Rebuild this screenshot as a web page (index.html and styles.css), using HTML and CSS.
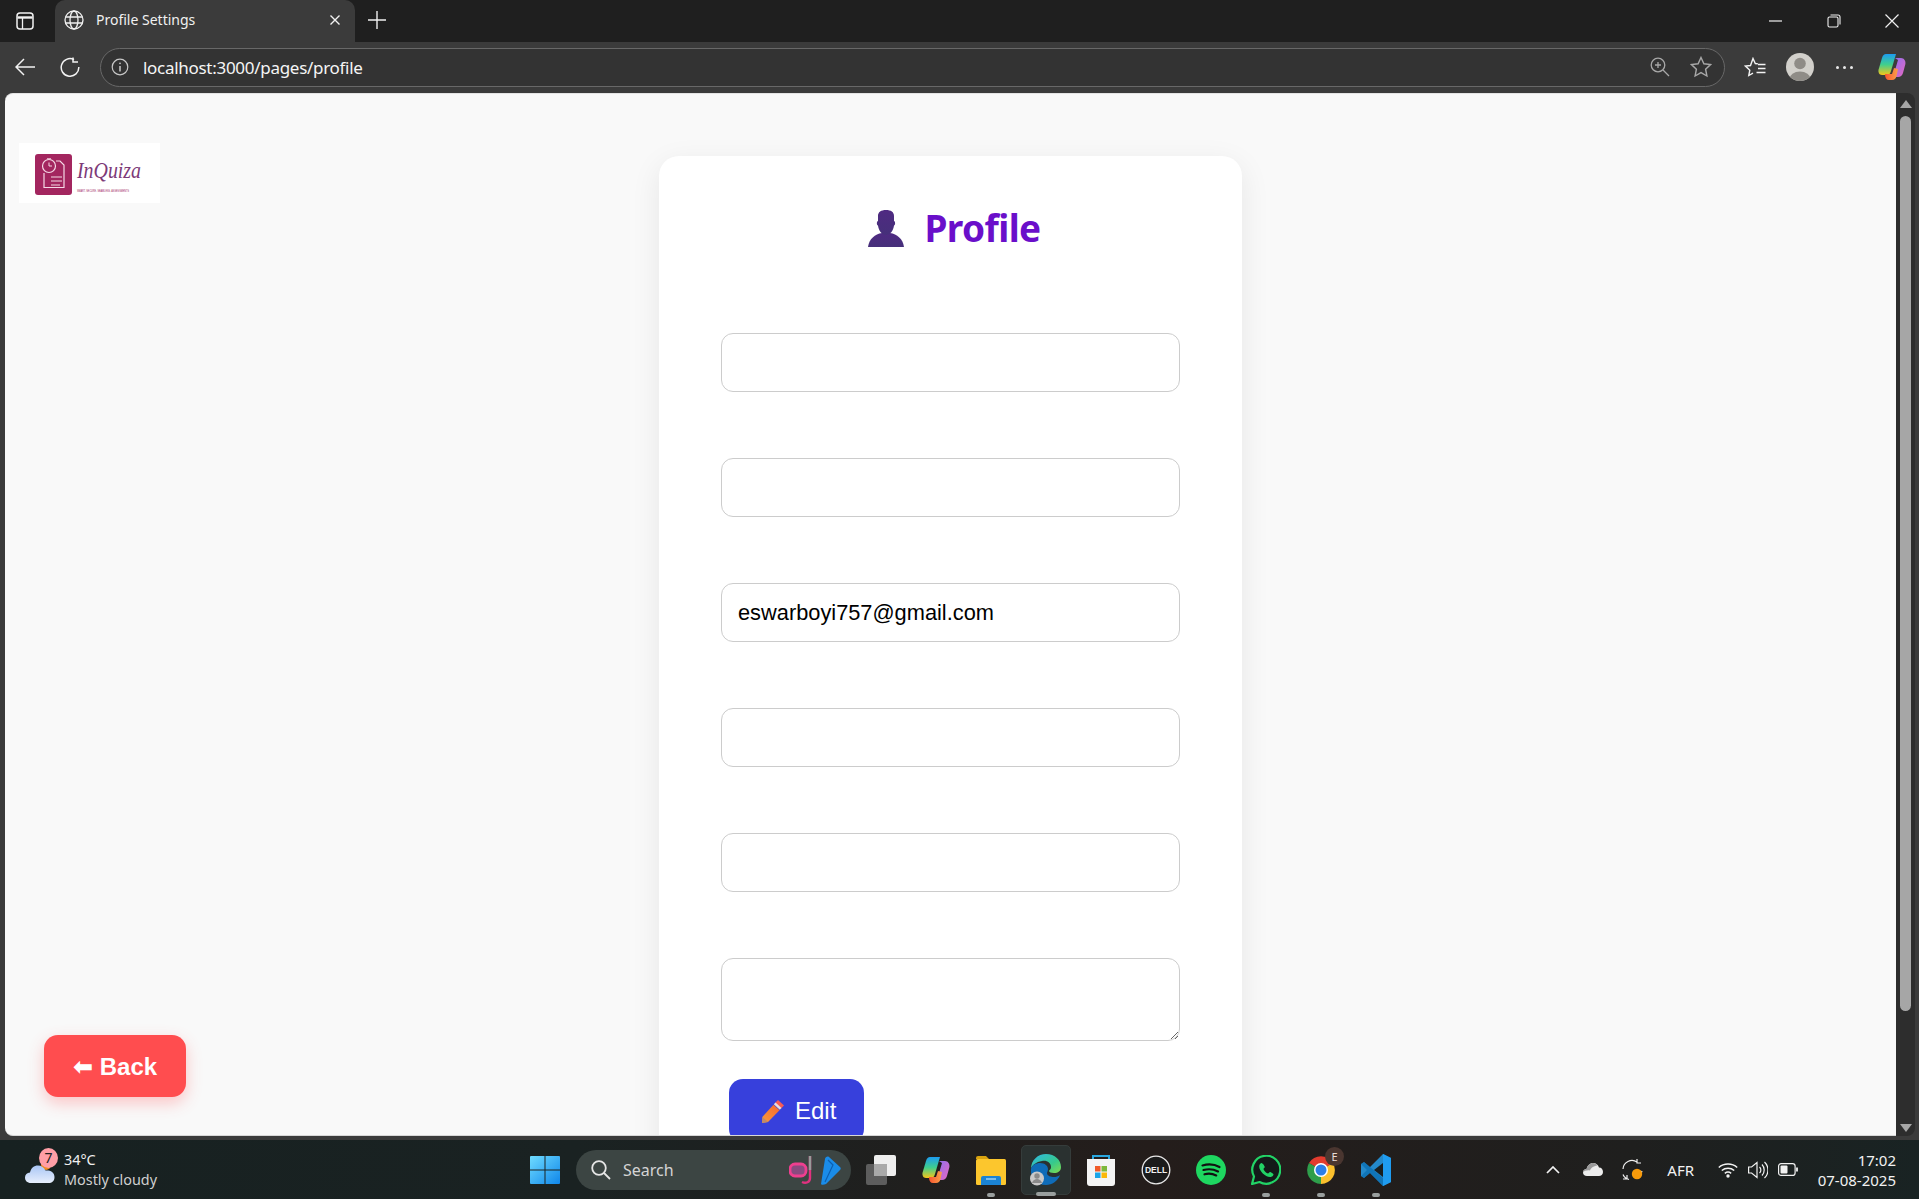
FILE: index.html
```html
<!DOCTYPE html>
<html lang="en">
<head>
<meta charset="utf-8">
<title>Profile Settings</title>
<link rel="stylesheet" href="styles.css">
</head>
<body>
<div class="window">
  <header class="tabbar">
    <svg class="tb-side" viewBox="0 0 18 18" width="18" height="18"><rect x="1" y="1" width="16" height="16" rx="3" fill="none" stroke="#f2f2f2" stroke-width="1.5"/><path d="M1.5 5.5h15" stroke="#f2f2f2" stroke-width="2.4"/><path d="M6.5 5v12" stroke="#f2f2f2" stroke-width="1.3"/></svg>
    <div class="tab">
      <svg viewBox="0 0 20 20" width="20" height="20" fill="none" stroke="#f0f0f0" stroke-width="1.3"><circle cx="10" cy="10" r="9"/><ellipse cx="10" cy="10" rx="4" ry="9"/><path d="M1.6 7h16.8M1.6 13h16.8"/></svg>
      <span class="tab-title">Profile Settings</span>
      <svg class="tab-x" viewBox="0 0 12 12" width="12" height="12"><path d="M1.5 1.5l9 9M10.5 1.5l-9 9" stroke="#f2f2f2" stroke-width="1.4"/></svg>
    </div>
    <svg class="tb-plus" viewBox="0 0 18 18" width="18" height="18"><path d="M9 0v18M0 9h18" stroke="#f0f0f0" stroke-width="1.4"/></svg>
    <div class="winbtns">
      <svg viewBox="0 0 14 14" width="14" height="14"><path d="M0 7h13" stroke="#f0f0f0" stroke-width="1.2"/></svg>
      <svg viewBox="0 0 14 14" width="14" height="14" fill="none" stroke="#f0f0f0" stroke-width="1.1"><rect x="1" y="3" width="10" height="10" rx="1.5"/><path d="M3.5 1h7.5a2 2 0 0 1 2 2v7.5"/></svg>
      <svg viewBox="0 0 14 14" width="14" height="14"><path d="M.5.5l13 13M13.500.5l-13 13" stroke="#f0f0f0" stroke-width="1.2"/></svg>
    </div>
  </header>

  <nav class="toolbar">
    <svg class="tl-back" viewBox="0 0 20 18" width="20" height="18" fill="none" stroke="#f2f2f2" stroke-width="1.5"><path d="M20 9H1M9 1L1 9l8 8"/></svg>
    <svg class="tl-reload" viewBox="0 0 20 20" width="20" height="20" fill="none" stroke="#f2f2f2" stroke-width="1.5"><path d="M14 2.6A8.800 8.800 0 1 0 18.800 10"/><path d="M13 .5v4.600h5"/></svg>
    <div class="addr">
      <svg viewBox="0 0 18 18" width="18" height="18" fill="none" stroke="#c8c8c8" stroke-width="1.2"><circle cx="9" cy="9" r="7.800"/><path d="M9 8v5.500" stroke-width="1.500"/><circle cx="9" cy="5.300" r=".9" fill="#c8c8c8" stroke="none"/></svg>
      <span class="url">localhost:3000/pages/profile</span>
      <svg class="ad-zoom" viewBox="0 0 20 20" width="20" height="20" fill="none" stroke="#a8a8a8" stroke-width="1.3"><circle cx="8" cy="8" r="6.800"/><path d="M5 8h6M8 5v6M13 13l6 6"/></svg>
      <svg class="ad-star" viewBox="0 0 22 22" width="22" height="22" fill="none" stroke="#a8a8a8" stroke-width="1.4"><path d="M11 1.500l2.900 6.300 6.600.8-4.900 4.600 1.300 6.800-5.900-3.400-5.900 3.400 1.300-6.800L1.500 8.600l6.600-.8z"/></svg>
    </div>
    <svg class="tl-fav" viewBox="0 0 22 20" width="22" height="20" fill="none" stroke="#f2f2f2" stroke-width="1.4"><path d="M13.800 6.700L11.300 6.500 9 1.500 6.500 8.500l-5 .6 4.300 4.100-1 5.300 4.200-2.300"/><path d="M14 7.500h7.500M14 11.500h7.500M12.500 15.500h9"/></svg>
    <svg class="tl-avatar" viewBox="0 0 28 28" width="28" height="28"><defs><clipPath id="avc"><circle cx="14" cy="14" r="14"/></clipPath></defs><circle cx="14" cy="14" r="14" fill="#d2d0cb"/><g clip-path="url(#avc)" fill="#8f8c87"><circle cx="14" cy="10.500" r="5.800"/><ellipse cx="14" cy="26" rx="10.500" ry="7.500"/></g></svg>
    <div class="tl-dots"><i></i><i></i><i></i></div>
    <svg class="tl-copilot" viewBox="0 0 28 28" width="28" height="28"><defs><linearGradient id="cpa" x1="0" y1="0" x2="0" y2="1"><stop offset="0" stop-color="#1d9cf0"/><stop offset=".5" stop-color="#3fcf8e"/><stop offset="1" stop-color="#f5c518"/></linearGradient><linearGradient id="cpb" x1="0" y1="0" x2="1" y2="1"><stop offset="0" stop-color="#8b6ff0"/><stop offset="1" stop-color="#e868c0"/></linearGradient><linearGradient id="cpc" x1="0" y1="0" x2="1" y2="0"><stop offset="0" stop-color="#f8552f"/><stop offset="1" stop-color="#f9a14a"/></linearGradient></defs><path d="M8 1h10l-5 17c-1 3-2 4-4.500 4H4C1 22 0 19 .6 16.500L4 5C5 2 6 1 8 1z" fill="url(#cpa)"/><path d="M17 5h6c3 0 5 3 4.400 6l-2.400 9c-.8 2.600-2.500 4-5 4h-5l5-17z" fill="url(#cpb)"/><path d="M7 21h7l2-6 4 1-1.500 7c-.6 2.500-2 4-4.500 4h-3c-2.500 0-4-2-4-6z" fill="url(#cpc)"/></svg>
  </nav>

  <div class="viewport">
    <main class="page">
      <div class="logo">
        <svg viewBox="0 0 141 60" width="141" height="60">
          <rect x="16" y="11" width="37" height="41" rx="3" fill="#a3265f"/>
          <circle cx="30" cy="23" r="6.500" fill="none" stroke="#f5d9e6" stroke-width="1.200"/>
          <path d="M30 19.500V23h3M28 15.800h4" stroke="#f5d9e6" stroke-width="1" fill="none"/>
          <path d="M25 30v14.500h20V22l-4-4h-4" fill="none" stroke="#f5d9e6" stroke-width="1.200"/>
          <path d="M32 34h11M32 38h11M32 42h9" stroke="#f5d9e6" stroke-width="1.200"/>
          <text class="logo-name" x="58" y="35" textLength="64" lengthAdjust="spacingAndGlyphs">InQuiza</text>
          <text class="logo-tag" x="58" y="48.500" textLength="52" lengthAdjust="spacingAndGlyphs">SMART. SECURE. SEAMLESS. ASSESSMENTS</text>
        </svg>
      </div>

      <section class="card">
        <h1 class="title">
          <svg viewBox="0 0 36 37" width="36" height="37"><defs><linearGradient id="pers" x1="0" y1="0" x2="0" y2="1"><stop offset="0" stop-color="#4f2a82"/><stop offset="1" stop-color="#46307a"/></linearGradient></defs><path d="M0 37C1 29 7 24 14 23h8c7 1 13 6 14 14z" fill="url(#pers)"/><path d="M10 6C10 2 13 0 18 0s8 2 8 6v5c1.500 0 1.500 4.500 0 4.500-.5 5-4 9.500-8 9.500s-7.500-4.500-8-9.500C8.500 15.500 8.500 11 10 11z" fill="url(#pers)"/></svg>
          <span>Profile</span>
        </h1>
        <form class="form">
          <input class="field" type="text" aria-label="First name">
          <input class="field" type="text" aria-label="Last name">
          <input class="field" type="email" aria-label="Email" value="eswarboyi757@gmail.com">
          <input class="field" type="text" aria-label="Phone">
          <input class="field" type="text" aria-label="Location">
          <textarea class="field area" aria-label="Bio"></textarea>
          <button class="edit" type="button">
            <svg viewBox="0 0 24 24" width="24" height="24"><defs><linearGradient id="pen" x1="0" y1="1" x2="1" y2="0"><stop offset="0" stop-color="#f99a3c"/><stop offset="1" stop-color="#f5682f"/></linearGradient></defs><path d="M17 1l6 5.500-3 3-6-5.500z" fill="#f85c55"/><path d="M14.500 3.500l6 5.500-1.700 1.800-6-5.500z" fill="#e8dfe0"/><path d="M12.500 5.800l6 5.500L7 23l-6 1 .5-6.300z" fill="url(#pen)"/><path d="M1.400 18l5.800 5L1 24z" fill="#c08a6a"/></svg>
            <span>Edit</span>
          </button>
        </form>
      </section>

      <button class="back" type="button">⬅ Back</button>
    </main>
    <aside class="scrollbar">
      <i class="sb-up"></i>
      <i class="sb-thumb"></i>
      <i class="sb-down"></i>
    </aside>
  </div>

  <footer class="taskbar">
    <div class="tk-left">
      <div class="weather-ic">
        <svg viewBox="0 0 32 32" width="32" height="32"><defs><linearGradient id="cl" x1="0" y1="0" x2="0" y2="1"><stop offset="0" stop-color="#a9c6f5"/><stop offset="1" stop-color="#e6eefc"/></linearGradient></defs><circle cx="22" cy="11" r="5" fill="#f08a24"/><path d="M7 29c-4 0-6-2.500-6-5.500S3 19 6 18.500C7 14 10 11.500 14 11.500c3.500 0 6 2 7.500 5 4-.5 9 1 9 6.500 0 4-2.500 6-6 6z" fill="url(#cl)"/></svg>
        <span class="badge">7</span>
      </div>
      <div class="weather">
        <span class="temp">34°C</span>
        <span class="cond">Mostly cloudy</span>
      </div>
    </div>
    <div class="tk-center">
      <svg class="winlogo" viewBox="0 0 30 30" width="30" height="30"><defs><linearGradient id="wn" x1="0" y1="0" x2="1" y2="1"><stop offset="0" stop-color="#6fdcff"/><stop offset="1" stop-color="#0f86ea"/></linearGradient></defs><path d="M1 1h13.500v13.500H0V2a1 1 0 0 1 1-1zM15.500 1H29a1 1 0 0 1 1 1v12.500H15.500zM0 15.500h14.500V29H1a1 1 0 0 1-1-1zM15.500 15.500H30V28a1 1 0 0 1-1 1H15.500z" fill="url(#wn)"/></svg>
      <div class="search">
        <svg viewBox="0 0 20 20" width="20" height="20" fill="none" stroke="#e6e6e6" stroke-width="1.800"><circle cx="8" cy="8" r="6.800"/><path d="M13 13l6 6"/></svg>
        <span class="search-t">Search</span>
        <svg class="snorkel" viewBox="0 0 52 30" width="52" height="30"><path d="M21 1v22c0 4-4 6-8 4" fill="none" stroke="#e0327f" stroke-width="2.400"/><path d="M21 1v14" stroke="#9a9a9a" stroke-width="2.400"/><rect x="1" y="9" width="16" height="12" rx="5" fill="#8a4a80" stroke="#ee3f8f" stroke-width="2.800"/><path d="M32 29l4-25c.3-2 2.500-3 4-2l11 10c1 1 1 2 0 3L37 29c-2 1-5 1-5 0z" fill="#1a8ce8"/><path d="M39 5l5 5-8 17" fill="none" stroke="#0c5fb0" stroke-width="1.200"/></svg>
      </div>
      <div class="apps">
        <span class="app">
          <svg viewBox="0 0 30 30" width="30" height="30"><rect x="0" y="9" width="21" height="21" rx="2" fill="#5d5d5d"/><rect x="8" y="0" width="22" height="21" rx="2" fill="#eeeeee"/><rect x="8" y="9" width="13" height="12" fill="#a9a9a9"/></svg>
        </span>
        <span class="app">
          <svg viewBox="0 0 28 28" width="28" height="28"><path d="M8 1h10l-5 17c-1 3-2 4-4.500 4H4C1 22 0 19 .6 16.500L4 5C5 2 6 1 8 1z" fill="url(#cpa)"/><path d="M17 5h6c3 0 5 3 4.400 6l-2.400 9c-.8 2.600-2.500 4-5 4h-5l5-17z" fill="url(#cpb)"/><path d="M7 21h7l2-6 4 1-1.500 7c-.6 2.500-2 4-4.500 4h-3c-2.500 0-4-2-4-6z" fill="url(#cpc)"/></svg>
        </span>
        <span class="app has-dot">
          <svg viewBox="0 0 30 30" width="30" height="30"><path d="M0 3a2 2 0 0 1 2-2h8l3 3h-13z" fill="#d9a30f"/><rect x="0" y="4" width="30" height="26" rx="1.500" fill="#fcc62d"/><path d="M5 30v-7a2 2 0 0 1 2-2h16a2 2 0 0 1 2 2v7z" fill="#1b83d4"/><path d="M10 24h10" stroke="#bfe3fb" stroke-width="1.200"/></svg>
        </span>
        <span class="app app-active has-dot">
          <svg viewBox="0 0 32 32" width="32" height="32"><defs><linearGradient id="eg" x1="0" y1="0" x2="1" y2="1"><stop offset="0" stop-color="#2fb8e8"/><stop offset=".6" stop-color="#36c98c"/><stop offset="1" stop-color="#7fdc4e"/></linearGradient></defs><path d="M1 15C1 6 8 0 16 0c9 0 15 6 15 13 0 4-3 6-7 6-3 0-5-1-5-2 0-1 2-1 2-4 0-4-4-7-9-6C6 8 2 11 1 15z" fill="url(#eg)"/><path d="M1 15c1-4 5-6 9-6 5 0 8 3 8 6 0 2-1 3-1 4 0 3 4 4 7 4 2 0 4-.5 6-2-2 6-8 10-14 10C7 31 0 24 1 15z" fill="#0f6cb8"/><circle cx="7" cy="24.500" r="7" fill="#c9c9c9"/><circle cx="7" cy="22" r="2.700" fill="#8a8a8a"/><path d="M2 29c1-3 3-4 5-4s4 1 5 4z" fill="#8a8a8a"/></svg>
        </span>
        <span class="app">
          <svg viewBox="0 0 30 32" width="30" height="32"><path d="M7 6V2h16v4" fill="none" stroke="#2aa8e0" stroke-width="2"/><path d="M1 5h28v24a3 3 0 0 1-3 3H4a3 3 0 0 1-3-3z" fill="#f4f4f4"/><rect x="9" y="12" width="5.500" height="5.500" fill="#f05a28"/><rect x="15.500" y="12" width="5.500" height="5.500" fill="#7db83a"/><rect x="9" y="18.500" width="5.500" height="5.500" fill="#1ba5e8"/><rect x="15.500" y="18.500" width="5.500" height="5.500" fill="#fbb809"/></svg>
        </span>
        <span class="app">
          <svg viewBox="0 0 30 30" width="30" height="30"><circle cx="15" cy="15" r="13.800" fill="#1b1b1b" stroke="#e8e8e8" stroke-width="1.300"/><text class="dell" x="15" y="18" text-anchor="middle">DELL</text></svg>
        </span>
        <span class="app">
          <svg viewBox="0 0 30 30" width="30" height="30"><circle cx="15" cy="15" r="15" fill="#1ed760"/><path d="M6.500 10.500c6-1.700 12-1.200 17 1.500M7.500 15c5-1.300 10-.9 14.500 1.400M8.500 19.300c4-1 8-.7 11.700 1.100" fill="none" stroke="#111" stroke-width="2.200" stroke-linecap="round"/></svg>
        </span>
        <span class="app has-dot">
          <svg viewBox="0 0 30 30" width="30" height="30"><path d="M1 29l2-7.500A14 14 0 1 1 8.500 27z" fill="#131a19" stroke="#22d366" stroke-width="2.200" stroke-linejoin="round"/><path d="M10.800 8c-1.200 0-2.600 1.500-2.600 3.500 0 4.500 6 10.500 10.800 10.500 2 0 3.500-1.500 3.500-2.800 0-.5-3-2.200-3.500-2.200-.6 0-1.400 1.500-2 1.500-1.200 0-4.500-3.300-4.500-4.500 0-.6 1.300-1.300 1.300-2 0-.6-1.700-3.500-2.500-3.500z" fill="#22d366"/></svg>
        </span>
        <span class="app has-dot">
          <svg viewBox="0 0 30 30" width="30" height="30"><path d="M15 15L3 8A14 14 0 0 1 27 8z" fill="#e23b2e"/><path d="M15 15L27 8A14 14 0 0 1 15 29z" fill="#fbc02d"/><path d="M15 15L15 29A14 14 0 0 1 3 8z" fill="#2e9e4b"/><circle cx="15" cy="15" r="7" fill="#fff"/><circle cx="15" cy="15" r="5.500" fill="#2d7ee8"/></svg>
          <span class="chrome-e">E</span>
        </span>
        <span class="app has-dot">
          <svg viewBox="0 0 30 32" width="30" height="32"><path d="M22 0l8 4v24l-8 4L9 19l-6 5-3-2v-12l3-2 6 5z" fill="#2489ca"/><path d="M22 0l8 4v24l-8 4z" fill="#1f9cf0"/><path d="M22 9l-9 7 9 7z" fill="#1a1f1f"/><path d="M0 10l3-2 19 16v8L9 19l-6 5-3-2 6-6z" fill="#0065a9" opacity=".55"/></svg>
        </span>
      </div>
    </div>
    <div class="tk-right">
      <svg class="tr-chev" viewBox="0 0 14 8" width="14" height="8" fill="none" stroke="#f2f2f2" stroke-width="1.700"><path d="M1 7l6-6 6 6"/></svg>
      <svg class="tr-cloud" viewBox="0 0 20 13" width="20" height="13"><path d="M4 13C1.500 13 0 11.500 0 9.500S1.500 6 3.500 6C4.500 2.500 7 0 10 0s5 1.500 6 4.500c2.500 0 4 2 4 4.500s-2 4-4 4z" fill="#ececec"/><path d="M0 9.500C0 7.500 1.500 6 3.500 6 4.500 2.500 7 0 10 0c2 0 3.500 1 4.500 2.500C10 3 8 5 7 7.500 4 7 1 8 0 9.500z" fill="#9a9a9a"/></svg>
      <svg class="tr-sync" viewBox="0 0 22 22" width="22" height="22" fill="none" stroke="#f0f0f0" stroke-width="1.200"><path d="M1 10A9 9 0 0 1 15 3M15 0v4h4M20 12a9 9 0 0 1-3 5M1 20h4v-4M1 15.500A9 9 0 0 0 7 20.500"/><circle cx="15" cy="15" r="5.200" fill="#f79a0b" stroke="none"/></svg>
      <span class="lang">AFR</span>
      <svg class="tr-wifi" viewBox="0 0 20 16" width="20" height="16" fill="none" stroke="#f2f2f2" stroke-width="1.500"><path d="M.8 5.500C5.800.8 14.200.8 19.200 5.500M3.800 8.500c3.500-3 9-3 12.400 0M6.800 11.300c2-1.500 4.400-1.500 6.400 0"/><circle cx="10" cy="14" r="1.700" fill="#f2f2f2" stroke="none"/></svg>
      <svg class="tr-vol" viewBox="0 0 20 18" width="20" height="18" fill="none" stroke="#f2f2f2" stroke-width="1.200"><path d="M.6 6h3L9 1.500v15L3.600 12h-3zM11.500 6a4 4 0 0 1 0 6M14 3.500a8 8 0 0 1 0 11M16.500 1a11 11 0 0 1 0 16"/></svg>
      <svg class="tr-bat" viewBox="0 0 20 13" width="20" height="13" fill="none" stroke="#f2f2f2" stroke-width="1.200"><rect x=".6" y=".6" width="16.500" height="11.800" rx="2.500"/><rect x="2.500" y="2.500" width="7" height="8" rx="1" fill="#f2f2f2" stroke="none"/><path d="M19 4.500v4" stroke-width="1.800"/></svg>
      <div class="clock"><span>17:02</span><span>07-08-2025</span></div>
    </div>
  </footer>
</div>
</body>
</html>
```

FILE: styles.css
```css
* { box-sizing: border-box; }
html, body { margin: 0; height: 100%; overflow: hidden; }
body { font-family: "Open Sans", "Noto Sans", sans-serif; background: #3b3b3b; }
.window { display: flex; flex-direction: column; height: 1199px; width: 1919px; }

/* Title bar */
.tabbar { height: 42px; flex: none; background: #1f1f1f; display: flex; align-items: center; padding-left: 16px; }
.tb-side { flex: none; margin-top: -1px; }
.tab { width: 300px; height: 42px; margin-left: 21px; background: #3b3b3b; border-radius: 10px 10px 0 0; display: flex; align-items: center; padding: 0 14px 3px 9px; }
.tab-title { margin-left: 12px; color: #f0f0f0; font-family: "Noto Sans", sans-serif; font-size: 14px; flex: 1; }
.tab-x { flex: none; }
.tb-plus { margin-left: 13px; margin-top: -2px; flex: none; }
.winbtns { margin-left: auto; display: flex; align-items: center; gap: 44px; padding-right: 20px; }

/* Toolbar */
.toolbar { height: 51px; flex: none; background: #3b3b3b; display: flex; align-items: center; padding: 0 12px 1px 15px; }
.tl-back { flex: none; }
.tl-reload { flex: none; margin-left: 25px; }
.addr { flex: none; margin-left: 20px; width: 1625px; height: 39px; border: 1px solid #686868; border-radius: 20px; background: #333333; display: flex; align-items: center; padding: 0 8px 0 10px; }
.url { margin-left: 14px; font-family: "Noto Sans", sans-serif; font-size: 17px; letter-spacing: -.29px; color: #f5f5f5; flex: 1; }
.ad-zoom { flex: none; margin-right: 20px; }
.ad-star { flex: none; margin-right: 4px; }
.tl-fav { flex: none; margin-left: 19px; }
.tl-avatar { flex: none; margin-left: 20px; }
.tl-dots { display: flex; gap: 4px; margin-left: 22px; flex: none; }
.tl-dots i { width: 3px; height: 3px; border-radius: 50%; background: #e8e8e8; }
.tl-copilot { flex: none; margin-left: 25px; }

/* Viewport */
.viewport { height: 1047px; flex: none; display: flex; padding-left: 5px; padding-right: 4px; background: #3b3b3b; padding-bottom: 4px; }
.page { position: relative; flex: 1; min-width: 0; overflow: hidden; background: #f9f9f9; border-radius: 8px 0 0 8px; border-top: 1px solid #e4e4e4; border-bottom: 1px solid #d8d8d8; display: flex; justify-content: center; align-items: flex-start; padding-top: 62px; }
.scrollbar { width: 19px; flex: none; background: #2d2d2d; border-radius: 0 8px 8px 0; display: flex; flex-direction: column; align-items: center; padding: 7px 0 4px; }
.sb-up { width: 0; height: 0; border-left: 6px solid transparent; border-right: 6px solid transparent; border-bottom: 8px solid #a6a6a6; }
.sb-thumb { width: 11px; height: 895px; margin-top: 8px; background: #a6a6a6; border-radius: 6px; }
.sb-down { margin-top: auto; width: 0; height: 0; border-left: 6px solid transparent; border-right: 6px solid transparent; border-top: 8px solid #a6a6a6; }

.logo { position: absolute; left: 14px; top: 49px; width: 141px; height: 60px; background: #fff; }
.logo svg { display: block; }
.logo-name { font-family: "Liberation Serif", serif; font-style: italic; font-size: 24px; fill: #7d3a78; }
.logo-tag { font-family: "Liberation Sans", sans-serif; font-size: 3.500px; fill: #a3265f; }

.card { width: 583px; flex: none; background: #fff; border-radius: 20px; box-shadow: 0 8px 30px rgba(0, 0, 0, .08); padding: 53px 62px 40px; }
.title { margin: 0; height: 38px; display: flex; justify-content: center; align-items: center; gap: 20px; color: #6a0fca; font-family: "Noto Sans", sans-serif; font-weight: 700; font-size: 37px; line-height: 38px; letter-spacing: -.6px; padding-left: 8px; }
.title svg { flex: none; }
.form { display: flex; flex-direction: column; gap: 66px; margin-top: 86px; }
.field { display: block; width: 459px; height: 59px; border: 1px solid #cccccc; border-radius: 12px; background: #fff; padding: 0 16px; font-family: "Liberation Sans", Arial, sans-serif; font-size: 21.8px; color: #000; outline: none; }
.area { height: 83px; resize: vertical; padding: 12px 16px; }
.edit { align-self: flex-start; margin: -28px 0 0 8px; width: 135px; height: 64px; border: 0; border-radius: 14px; background: #3740dc; color: #fff; font-family: "Liberation Sans", Arial, sans-serif; font-size: 24px; display: flex; align-items: center; gap: 10px; padding: 0 0 0 32px; }

.back { position: absolute; left: 39px; top: 941px; width: 142px; height: 62px; border: 0; border-radius: 14px; background: #ff4d4f; color: #fff; font-family: "Liberation Sans", "DejaVu Sans", sans-serif; font-weight: 700; font-size: 24px; box-shadow: 0 6px 16px rgba(255, 77, 79, .3); padding: 2px 0 0; }

/* Taskbar */
.taskbar { flex: 1; background: linear-gradient(90deg, #172121 0%, #1a2222 30%, #241d1b 60%, #1f1f1e 85%, #192323 100%); display: flex; align-items: center; }
.tk-left { width: 530px; flex: none; display: flex; align-items: center; padding-left: 24px; gap: 7px; }
.weather-ic { position: relative; width: 33px; height: 40px; display: flex; align-items: flex-end; padding-bottom: 4px; }
.badge { position: absolute; left: 15px; top: -2px; width: 19px; height: 20px; border-radius: 50%; background: #ff9ea6; color: #222; font-size: 14px; line-height: 20px; text-align: center; font-family: "Noto Sans", sans-serif; }
.weather { display: flex; flex-direction: column; font-family: "Noto Sans", sans-serif; font-size: 14.4px; line-height: 20px; color: #f0f0f0; }
.cond { color: #d0d0d0; }
.tk-center { display: flex; align-items: center; flex: none; }
.winlogo { flex: none; }
.search { width: 275px; height: 40px; margin-left: 16px; background: #3c4543; border-radius: 20px; display: flex; align-items: center; padding: 0 10px 0 15px; }
.search-t { margin-left: 12px; flex: 1; color: #d4d4d4; font-family: "Noto Sans", sans-serif; font-size: 16px; }
.apps { display: flex; margin-left: 2px; }
.app { position: relative; width: 55px; height: 50px; display: flex; align-items: center; justify-content: center; }
.app svg { display: block; }
.app-active { background: #2a3130; border: 1px solid #353c3b; border-radius: 5px; width: 50px; margin: 0 2.500px; }
.has-dot::after { content: ""; position: absolute; left: 50%; bottom: -2px; width: 8px; height: 4px; margin-left: -4px; border-radius: 2px; background: #9a9f9e; }
.app-active::after { width: 20px; margin-left: -10px; }
.chrome-e { position: absolute; left: 32px; top: 2px; width: 19px; height: 19px; border-radius: 50%; background: #4a3630; color: #e8dcd8; font-family: "Noto Sans", sans-serif; font-size: 11px; line-height: 19px; text-align: center; }
.dell { font-family: "Liberation Sans", sans-serif; font-weight: 700; font-size: 8.500px; fill: #f0f0f0; }
.tk-right { margin-left: auto; display: flex; align-items: center; padding-right: 23px; color: #f2f2f2; font-family: "Noto Sans", sans-serif; }
.tr-cloud { margin-left: 23px; }
.tr-sync { margin-left: 19px; }
.lang { margin-left: 23px; font-size: 15px; }
.tr-wifi { margin-left: 24px; }
.tr-vol { margin-left: 10px; }
.tr-bat { margin-left: 10px; }
.clock { margin-left: 18px; width: 80px; display: flex; flex-direction: column; align-items: flex-end; font-size: 15px; line-height: 20px; }
```
